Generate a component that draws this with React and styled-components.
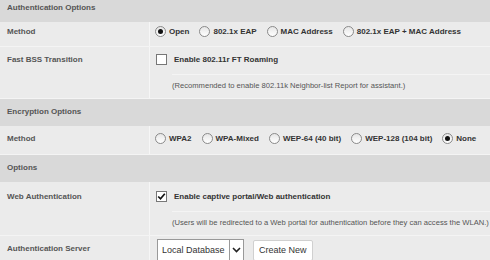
import React from 'react'
import styled, { createGlobalStyle } from 'styled-components'

const GlobalStyle = createGlobalStyle`
    html, body {
        margin: 0;
        padding: 0;
        background: #ebebeb;
        font-family: "Liberation Sans", Arial, sans-serif;
        overflow: hidden;
    }
`

const Page = styled.div`
    width: 490px;
    margin-top: -5px;
    background: #ebebeb;
`

const SectionHeader = styled.div`
    height: 27px;
    box-sizing: border-box;
    padding: 6px 7px 0;
    background: #d9d9d9;
    color: #555;
    font-size: 8px;
    font-weight: bold;
    line-height: 13px;
`

const Row = styled.div`
    display: flex;
    min-height: ${({ $h }) => $h}px;
    border-bottom: 1px solid #f4f4f4;
    box-sizing: border-box;
`

const Label = styled.div`
    width: 150px;
    flex: none;
    box-sizing: border-box;
    padding: ${({ $top }) => $top ?? 6}px 7px 0;
    border-right: 1px solid #f6f6f6;
    color: #555;
    font-size: 8px;
    font-weight: bold;
    line-height: 13px;
`

const Value = styled.div`
    flex: 1;
    display: flex;
    flex-direction: column;
    padding: ${({ $top }) => $top ?? 6}px 0 0 5px;
`

const OptionLine = styled.div`
    display: flex;
    align-items: center;
    gap: 10px;
    height: 13px;
`

const Option = styled.label`
    display: flex;
    align-items: center;
    gap: ${({ $gap }) => $gap ?? 3}px;
    color: #333;
    font-size: 8px;
    font-weight: bold;
    line-height: 13px;
    white-space: nowrap;
`

const RadioMark = styled.span`
    width: 11px;
    height: 11px;
    box-sizing: border-box;
    border-radius: 50%;
    border: 1px solid #8a8a8a;
    background: linear-gradient(#e6e6e6, #ffffff);
    display: flex;
    align-items: center;
    justify-content: center;
    flex: none;
    &::after {
        content: '';
        width: 5px;
        height: 5px;
        border-radius: 50%;
        background: ${({ $on }) => ($on ? '#111' : 'transparent')};
    }
`

const Check = styled.span`
    width: 11px;
    height: 11px;
    box-sizing: border-box;
    border: 1px solid #777;
    background: #fff;
    display: flex;
    align-items: center;
    justify-content: center;
    flex: none;
    margin-left: 1px;
`

const Note = styled.div`
    margin: 8px 0 0 17px;
    padding-top: 5px;
    border-top: 1px solid #f4f4f4;
    color: #555;
    font-size: 7.6px;
    line-height: 11px;
    white-space: nowrap;
`

const Controls = styled.div`
    display: flex;
    align-items: center;
    gap: 9px;
    padding-left: 2px;
`

const SelectBox = styled.div`
    display: flex;
    height: 22px;
    width: 87px;
    box-sizing: border-box;
    border: 1px solid #999;
    background: #fff;
`

const SelectText = styled.span`
    flex: 1;
    padding-left: 4px;
    color: #333;
    font-size: 9px;
    line-height: 20px;
    white-space: nowrap;
`

const SelectArrow = styled.span`
    width: 13px;
    border-left: 1px solid #999;
    display: flex;
    align-items: center;
    justify-content: center;
`

const Button = styled.button`
    height: 21px;
    padding: 0 5px;
    background: #fff;
    border: 1px solid #d0d0d0;
    border-radius: 2px;
    color: #333;
    font-family: "Liberation Sans", Arial, sans-serif;
    font-size: 9px;
`

const Radio = ({ on, children }) => (
    <Option>
        <RadioMark $on={on} />
        {children}
    </Option>
)

const CheckBox = ({ on }) => (
    <Check>
        {on && (
            <svg width="9" height="9" viewBox="0 0 9 9">
                <path d="M1.2 4.5 L3.5 6.8 L7.8 1.8" fill="none" stroke="#111" strokeWidth="1.7" />
            </svg>
        )}
    </Check>
)

const App = () => (
    <Page>
        <GlobalStyle />
        <SectionHeader>Authentication Options</SectionHeader>
        <Row $h={25}>
            <Label $top={3}>Method</Label>
            <Value $top={3}>
                <OptionLine>
                    <Radio on>Open</Radio>
                    <Radio>802.1x EAP</Radio>
                    <Radio>MAC Address</Radio>
                    <Radio>802.1x EAP + MAC Address</Radio>
                </OptionLine>
            </Value>
        </Row>
        <Row $h={52}>
            <Label>Fast BSS Transition</Label>
            <Value>
                <OptionLine>
                    <Option $gap={7}>
                        <CheckBox />
                        Enable 802.11r FT Roaming
                    </Option>
                </OptionLine>
                <Note>(Recommended to enable 802.11k Neighbor-list Report for assistant.)</Note>
            </Value>
        </Row>
        <SectionHeader>Encryption Options</SectionHeader>
        <Row $h={29}>
            <Label $top={6}>Method</Label>
            <Value $top={6}>
                <OptionLine>
                    <Radio>WPA2</Radio>
                    <Radio>WPA-Mixed</Radio>
                    <Radio>WEP-64 (40 bit)</Radio>
                    <Radio>WEP-128 (104 bit)</Radio>
                    <Radio on>None</Radio>
                </OptionLine>
            </Value>
        </Row>
        <SectionHeader>Options</SectionHeader>
        <Row $h={54}>
            <Label $top={8}>Web Authentication</Label>
            <Value $top={8}>
                <OptionLine>
                    <Option $gap={7}>
                        <CheckBox on />
                        Enable captive portal/Web authentication
                    </Option>
                </OptionLine>
                <Note>(Users will be redirected to a Web portal for authentication before they can access the WLAN.)</Note>
            </Value>
        </Row>
        <Row $h={40}>
            <Label>Authentication Server</Label>
            <Value $top={3}>
                <Controls>
                    <SelectBox>
                        <SelectText>Local Database</SelectText>
                        <SelectArrow>
                            <svg width="9" height="6" viewBox="0 0 9 6">
                                <path d="M1 1 L4.5 4.5 L8 1" fill="none" stroke="#222" strokeWidth="1.6" />
                            </svg>
                        </SelectArrow>
                    </SelectBox>
                    <Button>Create New</Button>
                </Controls>
            </Value>
        </Row>
    </Page>
)

export default App
